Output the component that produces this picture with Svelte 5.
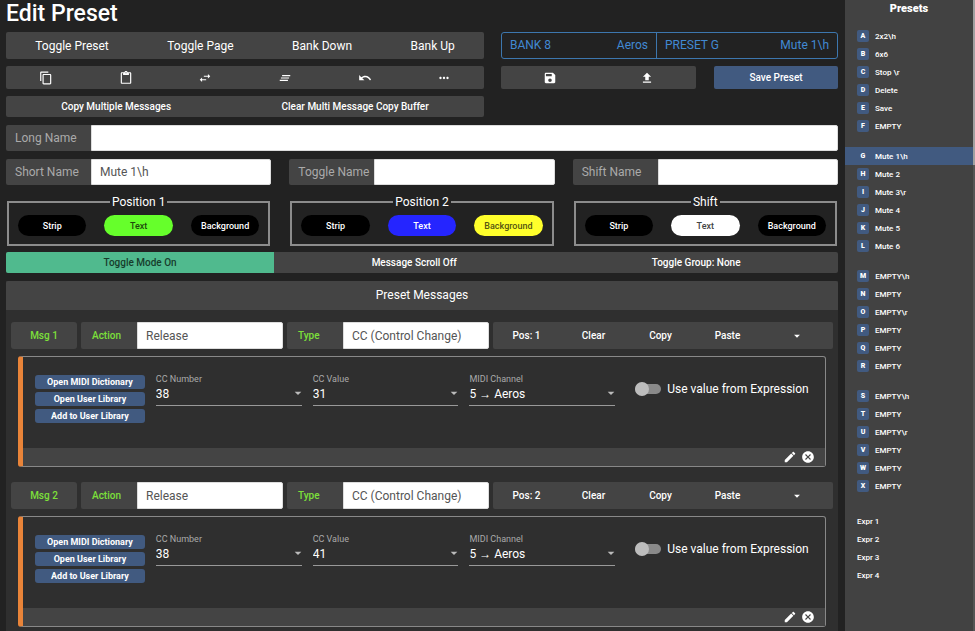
<script>
  const navButtons = ["Toggle Preset", "Toggle Page", "Bank Down", "Bank Up"];

  const icons = {
    copy: "M16 1H4c-1.1 0-2 .9-2 2v14h2V3h12V1zm3 4H8c-1.1 0-2 .9-2 2v14c0 1.1.9 2 2 2h11c1.1 0 2-.9 2-2V7c0-1.1-.9-2-2-2zm0 16H8V7h11v14z",
    paste:
      "M19 2h-4.18C14.4.84 13.3 0 12 0c-1.300 0-2.400.84-2.820 2H5c-1.100 0-2 .9-2 2v16c0 1.100.9 2 2 2h14c1.100 0 2-.9 2-2V4c0-1.100-.9-2-2-2zm-7 0c.55 0 1 .45 1 1s-.45 1-1 1-1-.45-1-1 .45-1 1-1zm7 18H5V4h2v3h10V4h2v16z",
    swap: "M6.990 11L3 15l3.990 4v-3H14v-2H6.990v-3zM21 9l-3.990-4v3H10v2h7.010v3L21 9z",
    clearAll: "M5 13h14v-2H5v2zm-2 4h14v-2H3v2zM7 7v2h14V7H7z",
    undo: "M12.500 8c-2.650 0-5.050.99-6.900 2.600L2 7v9h9l-3.620-3.620c1.390-1.160 3.160-1.880 5.120-1.880 3.540 0 6.550 2.310 7.600 5.500l2.370-.78C21.080 11.030 17.150 8 12.500 8z",
    more: "M6 10c-1.100 0-2 .9-2 2s.9 2 2 2 2-.9 2-2-.9-2-2-2zm12 0c-1.100 0-2 .9-2 2s.9 2 2 2 2-.9 2-2-.9-2-2-2zm-6 0c-1.100 0-2 .9-2 2s.9 2 2 2 2-.9 2-2-.9-2-2-2z",
    save: "M17 3H5c-1.110 0-2 .9-2 2v14c0 1.100.89 2 2 2h14c1.100 0 2-.9 2-2V7l-4-4zm-5 16c-1.660 0-3-1.340-3-3s1.340-3 3-3 3 1.340 3 3-1.340 3-3 3zm3-10H5V5h10v4z",
    upload: "M9 16h6v-6h4l-7-7-7 7h4zm-4 2h14v2H5z",
    edit: "M3 17.250V21h3.750L17.810 9.940l-3.750-3.750L3 17.250zM20.710 7.040c.39-.39.39-1.020 0-1.410l-2.340-2.340c-.39-.39-1.020-.39-1.410 0l-1.830 1.830 3.750 3.750 1.830-1.830z",
    cancel:
      "M12 2C6.470 2 2 6.470 2 12s4.470 10 10 10 10-4.470 10-10S17.530 2 12 2zm5 13.590L15.590 17 12 13.410 8.410 17 7 15.590 10.590 12 7 8.410 8.410 7 12 10.590 15.590 7 17 8.410 13.410 12 17 15.590z",
    down: "M7 10l5 5 5-5z",
  };

  const editActions = [
    { icon: "copy", label: "Copy" },
    { icon: "paste", label: "Paste" },
    { icon: "swap", label: "Swap" },
    { icon: "clearAll", label: "Clear all" },
    { icon: "undo", label: "Undo" },
    { icon: "more", label: "More" },
  ];

  const positions = [
    { title: "Position 1", strip: "black", text: "green", background: "black" },
    { title: "Position 2", strip: "black", text: "blue", background: "yellow" },
    { title: "Shift", strip: "black", text: "white", background: "black" },
  ];

  let names = [
    { id: "short", label: "Short Name", value: "Mute 1\\h" },
    { id: "toggle", label: "Toggle Name", value: "" },
    { id: "shift", label: "Shift Name", value: "" },
  ];
  let longName = "";

  let messages = [
    { ccNumber: "38", ccValue: "31", channel: "5 → Aeros", expression: false },
    { ccNumber: "38", ccValue: "41", channel: "5 → Aeros", expression: false },
  ];

  const banks = [
    ["2x2\\h", "6x6", "Stop \\r", "Delete", "Save", "EMPTY"],
    ["Mute 1\\h", "Mute 2", "Mute 3\\r", "Mute 4", "Mute 5", "Mute 6"],
    ["EMPTY\\h", "EMPTY", "EMPTY\\r", "EMPTY", "EMPTY", "EMPTY"],
    ["EMPTY\\h", "EMPTY", "EMPTY\\r", "EMPTY", "EMPTY", "EMPTY"],
  ];
  const expressions = ["Expr 1", "Expr 2", "Expr 3", "Expr 4"];
  const letters = "ABCDEFGHIJKLMNOPQRSTUVWX";
  let selected = 6;
</script>

{#snippet icon(name)}
  <svg class="icon" viewBox="0 0 24 24" aria-hidden="true">
    <path d={icons[name]} />
  </svg>
{/snippet}

<div class="page">
  <main>
    <h1>Edit Preset</h1>

    <div class="top">
      <div class="top-left">
        <div class="bar nav">
          {#each navButtons as label}
            <button>{label}</button>
          {/each}
        </div>
        <div class="bar tools">
          {#each editActions as action}
            <button aria-label={action.label}>{@render icon(action.icon)}</button>
          {/each}
        </div>
        <div class="bar small">
          <button>Copy Multiple Messages</button>
          <button>Clear Multi Message Copy Buffer</button>
        </div>
      </div>

      <div class="top-right">
        <div class="current">
          <div class="bank"><span>BANK 8</span><span>Aeros</span></div>
          <div class="preset"><span>PRESET G</span><span>Mute 1\h</span></div>
        </div>
        <div class="save-row">
          <div class="bar tools">
            <button aria-label="Save to file">{@render icon("save")}</button>
            <button aria-label="Upload">{@render icon("upload")}</button>
          </div>
          <button class="save">Save Preset</button>
        </div>
      </div>
    </div>

    <div class="field">
      <label for="long">Long Name</label>
      <input id="long" type="text" bind:value={longName} />
    </div>

    <div class="thirds">
      {#each names as name}
        <div class="field">
          <label for={name.id}>{name.label}</label>
          <input id={name.id} type="text" bind:value={name.value} />
        </div>
      {/each}
    </div>

    <div class="thirds colors">
      {#each positions as position}
        <fieldset>
          <legend>{position.title}</legend>
          <div class="pills">
            <button class={position.strip}>Strip</button>
            <button class={position.text}>Text</button>
            <button class={position.background}>Background</button>
          </div>
        </fieldset>
      {/each}
    </div>

    <div class="bar small modes">
      <button class="on">Toggle Mode On</button>
      <button>Message Scroll Off</button>
      <button>Toggle Group: None</button>
    </div>

    <section class="panel">
      <h2>Preset Messages</h2>

      {#each messages as message, i}
        <div class="message">
          <div class="message-head">
            <button class="msg">Msg {i + 1}</button>
            <div class="field pick">
              <label for="action-{i}">Action</label>
              <select id="action-{i}"><option>Release</option></select>
            </div>
            <div class="field pick">
              <label for="type-{i}">Type</label>
              <select id="type-{i}"><option>CC (Control Change)</option></select>
            </div>
            <div class="bar message-actions">
              <button>Pos: {i + 1}</button>
              <button>Clear</button>
              <button>Copy</button>
              <button>Paste</button>
              <button aria-label="More actions">{@render icon("down")}</button>
            </div>
          </div>

          <div class="card">
            <div class="card-body">
              <div class="library">
                <button>Open MIDI Dictionary</button>
                <button>Open User Library</button>
                <button>Add to User Library</button>
              </div>
              <div class="value">
                <label for="number-{i}">CC Number</label>
                <select id="number-{i}"><option>{message.ccNumber}</option></select>
                {@render icon("down")}
              </div>
              <div class="value">
                <label for="value-{i}">CC Value</label>
                <select id="value-{i}"><option>{message.ccValue}</option></select>
                {@render icon("down")}
              </div>
              <div class="value">
                <label for="channel-{i}">MIDI Channel</label>
                <select id="channel-{i}"><option>{message.channel}</option></select>
                {@render icon("down")}
              </div>
              <label class="switch">
                <input type="checkbox" bind:checked={message.expression} />
                <span>Use value from Expression</span>
              </label>
            </div>
            <div class="card-foot">
              <button aria-label="Edit message">{@render icon("edit")}</button>
              <button aria-label="Remove message">{@render icon("cancel")}</button>
            </div>
          </div>
        </div>
      {/each}
    </section>
  </main>

  <aside>
    <h2>Presets</h2>
    {#each banks as bank, b}
      <div class="group">
        {#each bank as preset, p}
          <button
            class:selected={selected === b * 6 + p}
            on:click={() => (selected = b * 6 + p)}
          >
            <span class="badge">{letters[b * 6 + p]}</span>
            {preset}
          </button>
        {/each}
      </div>
    {/each}
    <div class="group expr">
      {#each expressions as expr}
        <button>{expr}</button>
      {/each}
    </div>
  </aside>
  <div class="scroll"></div>
</div>

<style>
  :global(body) {
    margin: 0;
    background: #222;
    color: #fff;
    font-family: Roboto, "Liberation Sans", sans-serif;
  }
  .page,
  .page * {
    box-sizing: border-box;
  }
  .page {
    display: flex;
    min-height: 100vh;
  }
  button,
  input,
  select {
    margin: 0;
    padding: 0;
    border: 0;
    background: none;
    color: inherit;
    font: inherit;
    appearance: none;
  }
  button {
    cursor: pointer;
    white-space: nowrap;
  }
  .icon {
    display: block;
    width: 14px;
    height: 14px;
    fill: currentColor;
  }

  main {
    flex: 1;
    min-width: 0;
    display: flex;
    flex-direction: column;
    gap: 8px;
    padding: 0 7px 0 6px;
  }
  h1 {
    margin: 0;
    font-size: 23px;
    font-weight: 500;
    line-height: 27px;
  }

  .top {
    display: flex;
    gap: 17px;
    margin-top: -3px;
  }
  .top-left {
    flex: 478;
    display: flex;
    flex-direction: column;
    gap: 7px;
  }
  .top-right {
    flex: 337;
    display: flex;
    flex-direction: column;
    gap: 7px;
  }
  .bar {
    display: flex;
    background: #444;
    border-radius: 2px;
    font-weight: 500;
  }
  .bar button {
    flex: 1 1 auto;
    display: flex;
    align-items: center;
    justify-content: center;
  }
  .nav {
    height: 27px;
    font-size: 12px;
    font-weight: 400;
  }
  .tools {
    height: 23px;
  }
  .tools button {
    flex: 1;
  }
  .small {
    height: 21px;
    font-size: 10px;
  }

  .current {
    display: flex;
    height: 27px;
    border: 1px solid #3d77ae;
    border-radius: 3px;
    color: #4189d3;
    font-size: 12px;
    line-height: 25px;
  }
  .current div {
    display: flex;
    justify-content: space-between;
    padding: 0 8px;
  }
  .bank {
    flex: 154;
    border-right: 1px solid #3d77ae;
  }
  .preset {
    flex: 183;
  }
  .save-row {
    display: flex;
    gap: 18px;
  }
  .save-row .bar {
    flex: 195;
  }
  .save {
    flex: 124;
    background: #415a80;
    border-radius: 2px;
    font-size: 10px;
    font-weight: 500;
  }

  .field {
    display: flex;
    height: 26px;
    font-size: 12px;
  }
  .field label {
    width: 85px;
    padding-left: 9px;
    background: #444;
    border-radius: 2px 0 0 2px;
    color: #aaa;
    line-height: 26px;
  }
  .field input,
  .field select {
    flex: 1;
    min-width: 0;
    padding: 0 8px;
    background: #fff;
    border: 1px solid #ddd;
    border-radius: 0 2px 2px 0;
    color: #555;
  }

  .thirds {
    display: grid;
    grid-template-columns: repeat(3, 1fr);
    gap: 18px;
  }
  .colors {
    margin-top: 2px;
  }
  fieldset {
    min-width: 0;
    margin: 0 1px;
    padding: 6px 9px 8px;
    border: 2px solid #8c8c8c;
  }
  legend {
    margin: 0 auto;
    padding: 0 2px;
    font-size: 12px;
    font-weight: 400;
    line-height: 14px;
  }
  .pills {
    display: grid;
    grid-template-columns: repeat(3, 1fr);
    gap: 18px;
  }
  .pills button {
    height: 21px;
    border-radius: 11px;
    font-size: 9px;
    font-weight: 500;
  }
  .black {
    background: #000;
  }
  .green {
    background: #66ff2b;
    color: #1d4a0c;
  }
  .blue {
    background: #2525ff;
  }
  .yellow {
    background: #ffff2b;
    color: #555510;
  }
  .white {
    background: #fff;
    color: #444;
  }
  .modes {
    margin-top: -2px;
  }
  .modes .on {
    background: #50ba8e;
    border-radius: 2px 0 0 2px;
    color: #173d2c;
  }

  .panel {
    flex: 1;
    background: #2f2f2f;
  }
  .panel h2 {
    margin: 0 0 12px;
    background: #444;
    border-radius: 2px 2px 0 0;
    font-size: 12px;
    font-weight: 400;
    line-height: 29px;
    text-align: center;
  }
  .message {
    padding: 0 5px;
    margin-bottom: 15px;
  }
  .message:last-child {
    margin-bottom: 0;
  }
  .message-head {
    display: flex;
    gap: 4px;
    margin-bottom: 7px;
  }
  .msg {
    flex: 66;
    background: #444;
    border-radius: 3px;
    color: #7de03a;
    font-size: 10px;
    font-weight: 500;
  }
  .pick {
    flex: 202;
    height: 27px;
  }
  .pick label {
    width: 56px;
    padding-left: 11px;
    color: #7de03a;
    font-size: 10px;
    font-weight: 500;
    line-height: 27px;
  }
  .message-actions {
    flex: 340;
    display: grid;
    grid-template-columns: repeat(4, 67fr) 72fr;
    font-size: 10px;
  }

  .card {
    margin: 0 7px;
    border: 1px solid #888;
    border-left: 5px solid #e98439;
    border-radius: 3px;
  }
  .card-body {
    display: flex;
    gap: 11px;
    height: 91px;
    padding: 18px 12px 0;
  }
  .library {
    flex: 110;
    display: flex;
    flex-direction: column;
    gap: 3px;
  }
  .library button {
    height: 14px;
    background: #415a80;
    border-radius: 3px;
    font-size: 9px;
    font-weight: 700;
    line-height: 14px;
  }
  .value {
    flex: 146;
    position: relative;
    display: flex;
    flex-direction: column;
    height: 31px;
    border-bottom: 1px solid #999;
  }
  .value label {
    color: #aaa;
    font-size: 9px;
    line-height: 8px;
  }
  .value select {
    font-size: 12px;
    line-height: 22px;
  }
  .value .icon {
    position: absolute;
    right: -4px;
    bottom: 4px;
    width: 16px;
    height: 16px;
    fill: #bbb;
    pointer-events: none;
  }
  .switch {
    flex: 178;
    display: flex;
    align-items: center;
    gap: 6px;
    height: 28px;
    margin-left: 9px;
    font-size: 12px;
    white-space: nowrap;
  }
  .switch input {
    position: relative;
    width: 26px;
    height: 10px;
    background: #8a8a8a;
    border-radius: 5px;
  }
  .switch input::before {
    content: "";
    position: absolute;
    top: -2px;
    left: 0;
    width: 14px;
    height: 14px;
    background: #bdbdbd;
    border-radius: 50%;
  }
  .switch input:checked::before {
    left: 12px;
  }
  .card-foot {
    display: flex;
    justify-content: flex-end;
    align-items: center;
    gap: 4px;
    height: 18px;
    padding-right: 10px;
    background: #444;
  }

  aside {
    width: 128px;
    background: #424242;
    font-size: 8px;
    font-weight: 500;
  }
  aside h2 {
    margin: 0 0 10px;
    font-size: 11px;
    font-weight: 900;
    line-height: 17px;
    text-align: center;
  }
  .group {
    margin-bottom: 12px;
  }
  .group button {
    display: flex;
    align-items: center;
    gap: 6px;
    width: 100%;
    height: 18px;
    padding-left: 12px;
  }
  .badge {
    min-width: 12px;
    padding: 0 3px;
    background: #415a80;
    border-radius: 2px;
    font-size: 7px;
    font-weight: 900;
    line-height: 12px;
    text-align: center;
  }
  .group .selected {
    background: #415a80;
  }
  .expr {
    margin-top: 17px;
  }
  .scroll {
    width: 2px;
    background: linear-gradient(#a0a0a0 165px, #555 165px);
  }
</style>
